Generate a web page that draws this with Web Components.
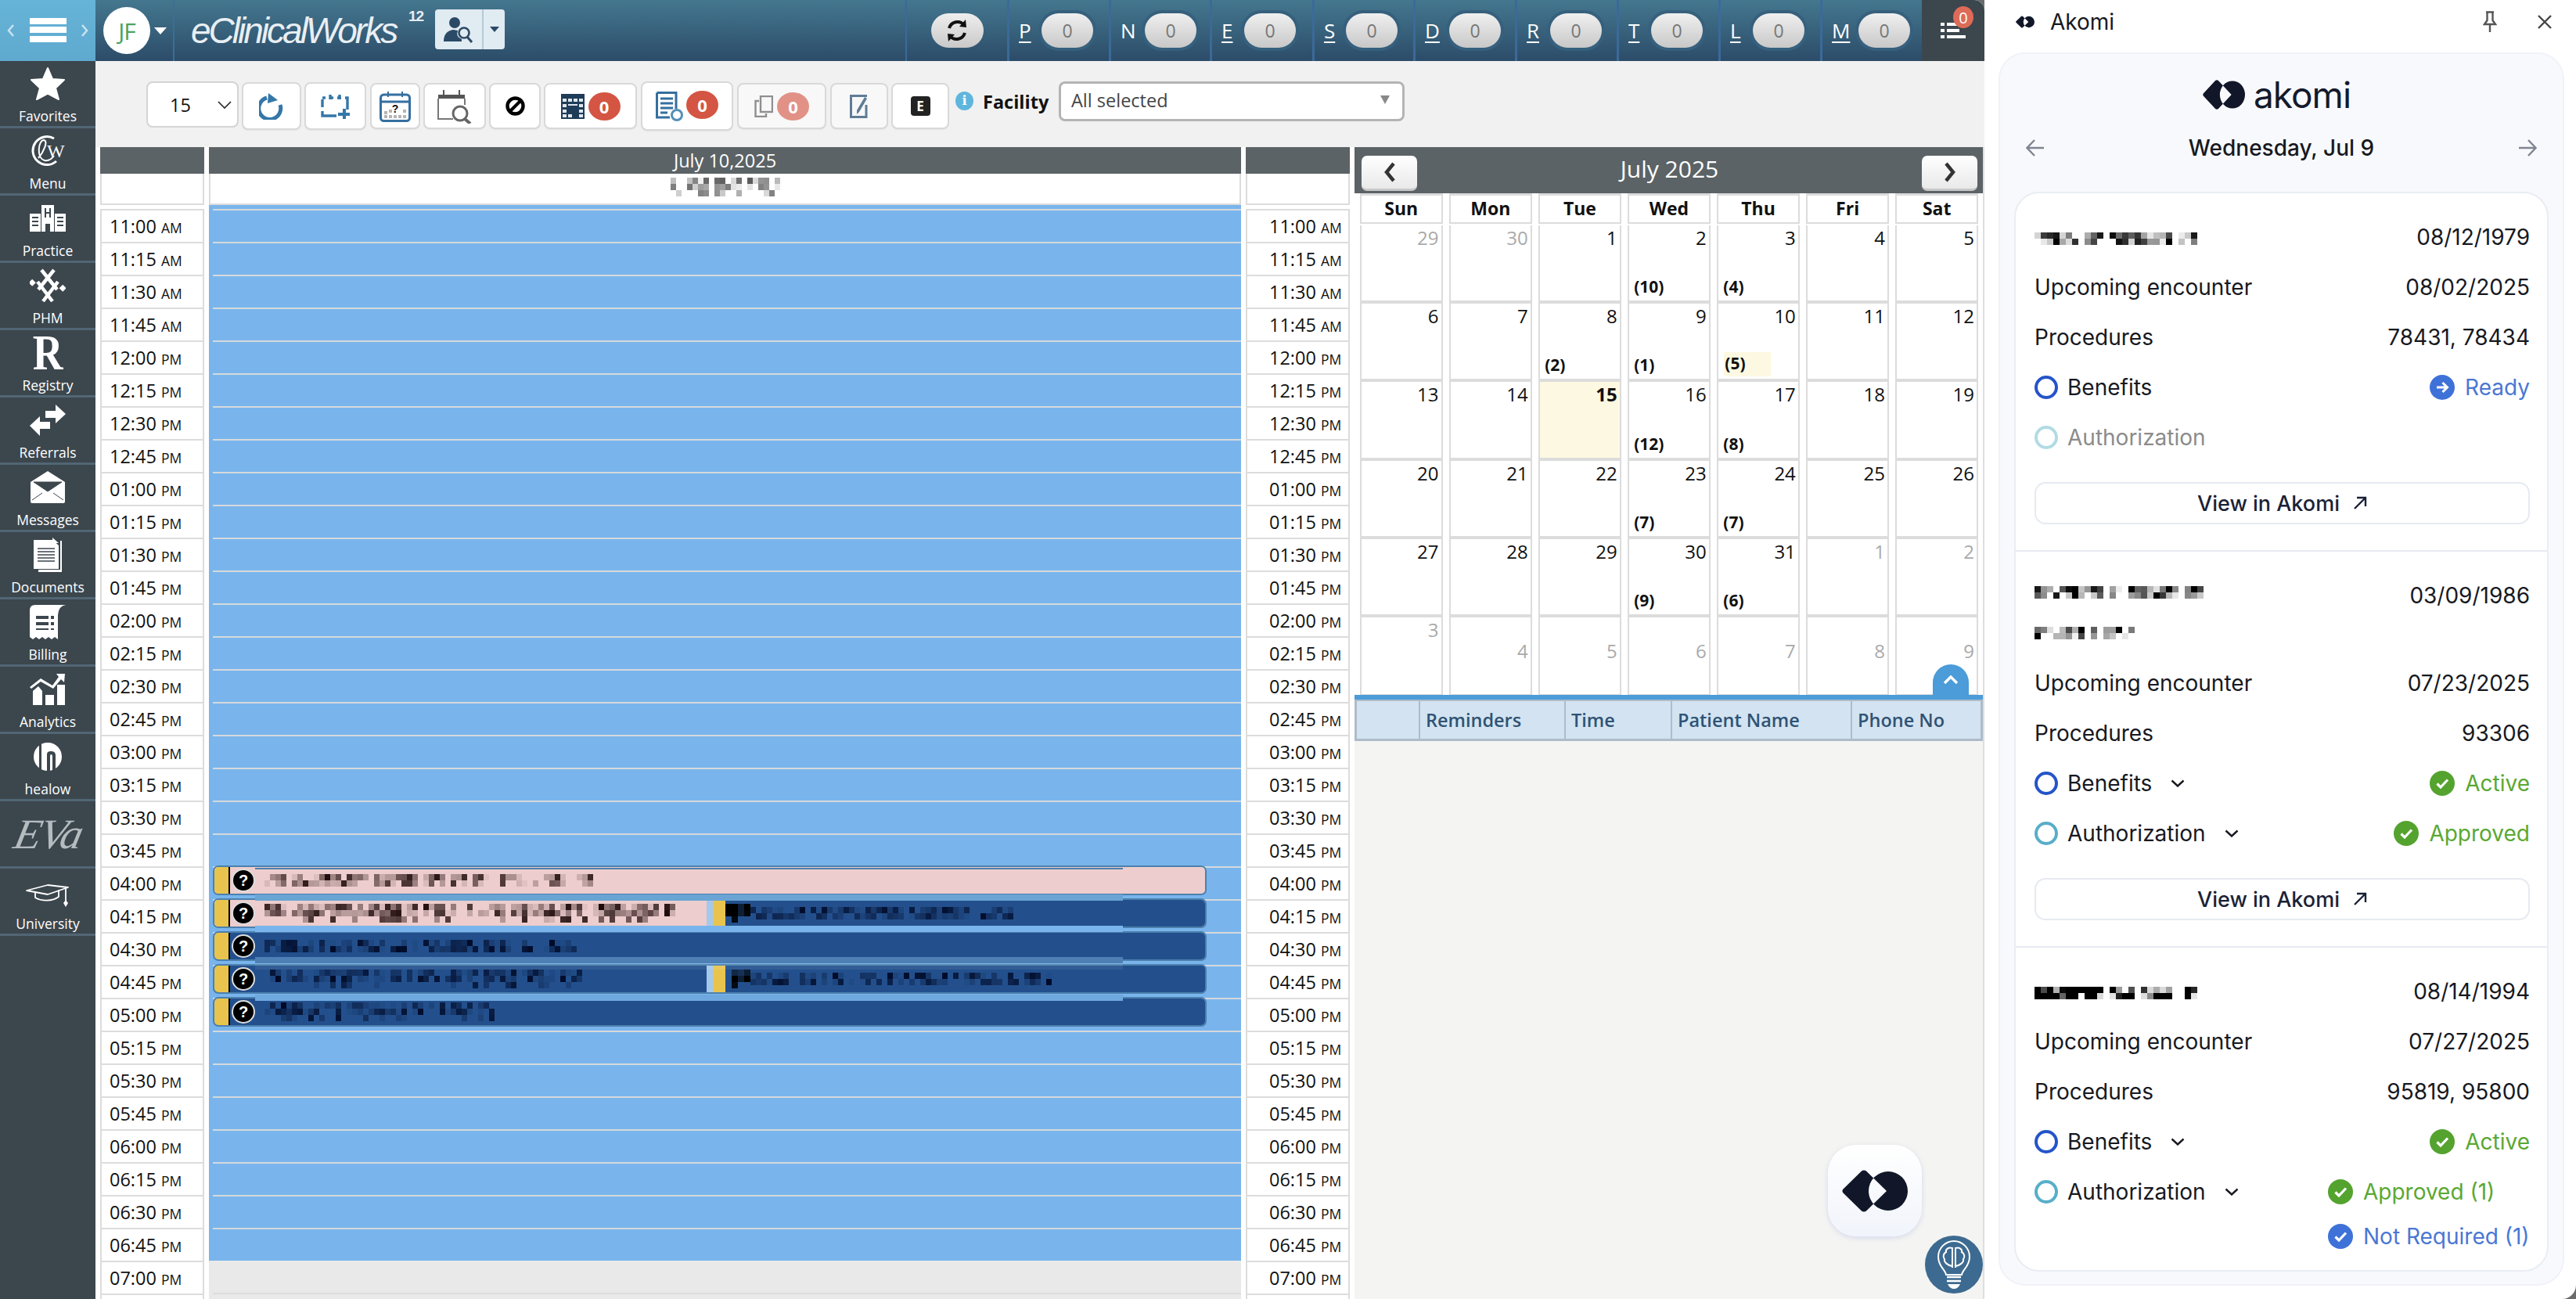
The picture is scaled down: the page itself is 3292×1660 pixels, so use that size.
<!DOCTYPE html>
<html>
<head>
<meta charset="utf-8">
<title>Schedule</title>
<style>
html, body { margin: 0; padding: 0; background: #fff; }
body { display: flex; width: 3292px; height: 1660px; overflow: hidden; background: #6b6b6b; font-family: "Open Sans", "Liberation Sans", sans-serif; }
</style>
</head>
<body>
<ecw-shell>
    <top-bar slot="top"></top-bar>
    <side-nav slot="nav"></side-nav>
    <tool-bar slot="tools"></tool-bar>
    <day-schedule slot="day"></day-schedule>
    <month-panel slot="month"></month-panel>
</ecw-shell>
<akomi-panel>
    <akomi-patient dob="08/12/1979" date="08/02/2025" procedures="78431, 78434" seed="11" namecols="27">
        <akomi-row dot="#2454c9" slot="rows">Benefits<akomi-status slot="value" kind="ready">Ready</akomi-status></akomi-row>
        <akomi-row dot="#b2dbe3" muted slot="rows">Authorization</akomi-row>
    </akomi-patient>
    <akomi-patient dob="03/09/1986" date="07/23/2025" procedures="93306" seed="23" namecols="28" second="16">
        <akomi-row dot="#2454c9" chevron slot="rows">Benefits<akomi-status slot="value" kind="ok">Active</akomi-status></akomi-row>
        <akomi-row dot="#58aec9" chevron slot="rows">Authorization<akomi-status slot="value" kind="ok">Approved</akomi-status></akomi-row>
    </akomi-patient>
    <akomi-patient dob="08/14/1994" date="07/27/2025" procedures="95819, 95800" seed="37" namecols="26" dark last>
        <akomi-row dot="#2454c9" chevron slot="rows">Benefits<akomi-status slot="value" kind="ok">Active</akomi-status></akomi-row>
        <akomi-row dot="#58aec9" chevron slot="rows">Authorization<div slot="value" style="display:flex;flex-direction:column;gap:25px;width:258px"><akomi-status kind="ok">Approved (1)</akomi-status><akomi-status kind="info">Not Required (1)</akomi-status></div></akomi-row>
    </akomi-patient>
</akomi-panel>

<script>
const AKOMI_MARK = `<path fill-rule="evenodd" d="M1.5 24.5 L25 1.5 Q28 -.6 31 1.5 L57 27 L31 52.5 Q28 54.6 25 52.5 L1.5 29.5 Q-.6 27 1.5 24.5Z M34 27 a25 25 0 1 0 50 0 a25 25 0 1 0 -50 0Z"/>`;

const NAV_ICONS = {
    star: `<svg width="46" height="44" viewBox="0 0 46 44"><polygon fill="#fff" stroke="#fff" stroke-width="2" stroke-linejoin="round" points="23,2 29,16 44,17 33,27.5 37,42 23,34.5 9,42 13,27.5 2,17 17,16"/></svg>`,
    ecw: `<svg width="46" height="42" viewBox="0 0 46 42"><path d="M31 5 A18 18 0 1 0 34 34" fill="none" stroke="#fff" stroke-width="3"/><path d="M11 30 C18 22 24 8 18 7 C11 7 8 30 19 33 C25 34 29 30 31 27" fill="none" stroke="#fff" stroke-width="2"/><text x="22" y="29" font-family="Liberation Serif" font-size="24" fill="#fff">W</text></svg>`,
    practice: `<svg width="46" height="34" viewBox="0 0 46 34"><g fill="#fff"><rect y="11" width="14" height="23"/><rect x="32" y="11" width="14" height="23"/><rect x="15" width="16" height="34"/></g><g fill="#3c464d"><rect x="19" y="4" width="2" height="12"/><rect x="25" y="4" width="2" height="12"/><rect x="19" y="9" width="8" height="2"/><rect x="20" y="24" width="6" height="10"/><rect x="3" y="15" width="8" height="2"/><rect x="3" y="20" width="8" height="2"/><rect x="3" y="25" width="8" height="2"/><rect x="35" y="15" width="8" height="2"/><rect x="35" y="20" width="8" height="2"/><rect x="35" y="25" width="8" height="2"/></g></svg>`,
    phm: `<svg width="46" height="44" viewBox="0 0 46 44"><g stroke="#fff" stroke-width="4.5"><path d="M15 2 L35 27"/><path d="M10 17 L29 42"/><path d="M31 2 L11 27"/><path d="M36 17 L17 42"/></g><g fill="#fff"><rect x="0" y="15" width="6.5" height="6.5" transform="rotate(45 3.2 18.2)"/><rect x="39" y="22" width="6.5" height="6.5" transform="rotate(45 42.2 25.2)"/></g></svg>`,
    registry: `<span class="r">R</span>`,
    referrals: `<svg width="46" height="40" viewBox="0 0 46 40"><g fill="#fff"><polygon points="20,8 33,8 33,0 46,12 33,24 33,17 20,17"/><polygon points="26,22 13,22 13,15 0,27 13,40 13,31 26,31"/></g></svg>`,
    messages: `<svg width="44" height="42" viewBox="0 0 44 42"><path d="M0 14 L22 0 L44 14 V39 Q44 41 42 41 H2 Q0 41 0 39Z" fill="#fff"/><path d="M4 14 L40 14 L22 26Z M2 37 L15 28 M42 37 L29 28" fill="#3c464d" stroke="#3c464d" stroke-width="1"/></svg>`,
    documents: `<svg width="36" height="44" viewBox="0 0 36 44"><path d="M34 4 H36 V44 H6 V41 H34Z" fill="#fff"/><path d="M0 3 H24 L32 10 V40 H0Z" fill="#fff"/><path d="M5 14 H27 M5 18 H27 M5 22 H27 M5 26 H27 M5 30 H27" stroke="#3c464d" stroke-width="1.6"/><path d="M24 0 L32 7 H24Z" fill="#fff"/></svg>`,
    billing: `<svg width="46" height="46" viewBox="0 0 46 46"><path d="M7 1 H46 Q37 2 36 14 V45 L32 42 L28 45 L24 42 L20 45 L16 42 L12 45 L8 42 L4 45 L0 42 V8 Q0 1 7 1Z" fill="#fff"/><path d="M8 15 H24 V19 H8Z M27 15 H31 V19 H27Z M8 23 H24 V27 H8Z M27 23 H31 V27 H27Z M8 31 H24 V33 H8Z M27 31 H31 V33 H27Z" fill="#3c464d"/></svg>`,
    analytics: `<svg width="46" height="40" viewBox="0 0 46 40"><g fill="#fff"><path d="M4 22 L11 16 L16 22 V40 H4Z"/><rect x="20" y="27" width="11" height="13"/><rect x="35" y="14" width="10" height="26"/><polygon points="34,0 45,0 44,11 40,7 30,19 14,10 2,19 0,17 14,6 29,15 37,4"/></g></svg>`,
    healow: `<svg width="36" height="36" viewBox="0 0 36 36"><circle cx="18" cy="18" r="18" fill="#fff"/><rect x="7" y="0" width="3" height="36" fill="#3c464d"/><path d="M17 36 V15 Q17 11 22 11 Q28 11 28 16 V36 H24 V18 Q24 15 22 15 Q21 15 21 18 V36Z" fill="#3c464d"/></svg>`,
    eva: `<span class="eva">EVa</span>`,
    hat: `<svg width="56" height="30" viewBox="0 0 56 30"><g fill="none" stroke="#fff" stroke-width="1.8" stroke-linejoin="round"><path d="M1 9 L28 2 L54 5 L28 14Z"/><path d="M12 10 V18 C20 23 34 23 42 17 V8"/><path d="M51 6 V22"/></g><path d="M51 21 L54 25 L51 30 L48 25Z" fill="#fff"/></svg>`
};

const TOOL_ICONS = {
    refresh: `<svg width="32" height="34" viewBox="0 0 32 34"><path d="M10 6 A14 14 0 1 0 27 15" fill="none" stroke="#3477a8" stroke-width="5"/><polygon fill="#3477a8" points="12,0 24,9 11,13"/></svg>`,
    slotadd: `<svg width="37" height="32" viewBox="0 0 37 32"><g fill="none" stroke="#3477a8" stroke-width="3.4"><path d="M2 22 V28 H20"/><path d="M2 17 V7 M2 5 H6 M11 5 H16 M21 5 H26 M31 5 H34 V20"/><path d="M12 1 V7 M24 1 V7"/><path d="M30 19 V32 M22 26 H37" stroke-width="4"/></g></svg>`,
    calhelp: `<svg width="40" height="40" viewBox="0 0 40 40"><rect x="1.5" y="5" width="37" height="33.5" rx="4" fill="#fff" stroke="#356f9f" stroke-width="3"/><path d="M2 14 H38" stroke="#356f9f" stroke-width="3"/><path d="M11 1 V8 M29 1 V8" stroke="#356f9f" stroke-width="2"/><g fill="#b5b5b5"><rect x="6" y="26" width="4" height="4"/><rect x="6" y="31" width="4" height="4"/><rect x="12" y="31" width="4" height="4"/><rect x="18" y="31" width="4" height="4"/><rect x="24" y="31" width="4" height="4"/><rect x="30" y="31" width="4" height="4"/><rect x="30" y="24" width="4" height="4"/><rect x="12" y="24" width="4" height="4"/></g><text x="20" y="28" text-anchor="middle" font-family="Liberation Sans" font-weight="700" font-size="14" fill="#111">?</text></svg>`,
    calsearch: `<svg width="44" height="44" viewBox="0 0 44 44"><path d="M1 7 H35 V12 H1Z" fill="#555"/><path d="M8 1 V8 M28 1 V8" stroke="#555" stroke-width="2"/><path d="M1 12 V38 H20 M35 12 V20" fill="none" stroke="#777" stroke-width="2"/><circle cx="29" cy="31" r="9" fill="none" stroke="#666" stroke-width="3"/><path d="M35 38 L42 44" stroke="#666" stroke-width="4"/></svg>`,
    ban: `<svg width="25" height="25" viewBox="0 0 25 25"><circle cx="12.5" cy="12.5" r="10" fill="none" stroke="#000" stroke-width="4.4"/><path d="M6 19 L19 6" stroke="#000" stroke-width="4"/></svg>`,
    grid: `<svg width="30" height="32" viewBox="0 0 30 32"><rect width="30" height="32" fill="#1f3c58"/><g fill="#dfe7ee"><rect x="2" y="6" width="5" height="4"/><rect x="9" y="6" width="5" height="4"/><rect x="16" y="6" width="5" height="4"/><rect x="23" y="6" width="5" height="4"/><rect x="2" y="13" width="5" height="4"/><rect x="23" y="13" width="5" height="4"/><rect x="9" y="13" width="12" height="2"/><rect x="2" y="20" width="5" height="4"/><rect x="23" y="20" width="5" height="4"/><rect x="9" y="26" width="5" height="4"/><rect x="2" y="26" width="5" height="4"/><rect x="23" y="26" width="5" height="4"/></g></svg>`,
    doc: `<svg width="36" height="38" viewBox="0 0 36 38"><path d="M1.5 1.5 H26 V22 M1.5 1.5 V33 H18" fill="#fff" stroke="#356f9f" stroke-width="3"/><path d="M6 9 H22 M6 15 H22 M6 21 H22 M6 27 H15" stroke="#356f9f" stroke-width="3"/><circle cx="27" cy="30" r="6.5" fill="#fff" stroke="#5590b8" stroke-width="3"/></svg>`,
    copy: `<svg width="24" height="28" viewBox="0 0 24 28"><rect x="8" y="1" width="15" height="20" fill="#f8f8f8" stroke="#8f8f8f" stroke-width="2.4"/><path d="M6 7 H1.5 V27 H15 V23" fill="none" stroke="#8f8f8f" stroke-width="2.4"/></svg>`,
    edit: `<svg width="24" height="30" viewBox="0 0 24 30"><path d="M22 1.5 H1.5 V28.5 H21 V13" fill="none" stroke="#5f7c96" stroke-width="3"/><path d="M22 5 L12 22 L9 25 L9 20 L19 3Z" fill="#5f7c96"/></svg>`
};

class EcwShell extends HTMLElement {
    constructor() {
        super();
        this.attachShadow({mode: "open"});
    }
    connectedCallback() {
        this.shadowRoot.innerHTML = `
        <style>
        :host {
            display: grid;
            grid-template-columns: 122px 1fr;
            grid-template-rows: 78px 110px 1fr;
            flex: none;
            width: 2536px;
            height: 1660px;
            background: #fff;
            overflow: hidden;
            border-top-right-radius: 14px;
            font-family: "Open Sans", "Liberation Sans", sans-serif;
        }
        .top { grid-column: 1 / 3; display: flex; }
        .nav { grid-row: 2 / 4; display: flex; }
        .main { display: flex; min-height: 0; }
        .tools { display: flex; }
        </style>
        <div class="top"><slot name="top"></slot></div>
        <div class="nav"><slot name="nav"></slot></div>
        <div class="tools"><slot name="tools"></slot></div>
        <div class="main"><slot name="day"></slot><slot name="month"></slot></div>`;
    }
}

class TopBar extends HTMLElement {
    constructor() {
        super();
        this.attachShadow({mode: "open"});
    }
    connectedCallback() {
        // letter, underlined, cell width, gap right of the pill
        const cells = [["P", 1, 130, 20], ["N", 0, 129, 17], ["E", 1, 131, 21], ["S", 1, 129, 20], ["D", 1, 130, 18], ["R", 1, 130, 19], ["T", 1, 130, 20], ["L", 1, 130, 20], ["M", 1, 130, 15]];
        this.shadowRoot.innerHTML = `
        <style>
        :host {
            display: flex;
            width: 100%;
            height: 78px;
            background: linear-gradient(#44778f, #2c4c69);
            color: #fff;
        }
        .burger { width: 122px; flex: none; background: linear-gradient(#66b4d8, #5fa9cf); display: flex; align-items: center; justify-content: center; }
        .avatar { width: 101px; flex: none; display: flex; align-items: center; padding-left: 10px; box-sizing: border-box; border-right: 2px solid #3c6f92; gap: 5px; }
        .circle { width: 60px; height: 60px; border-radius: 50%; background: #fff; color: #4ba35f; font-size: 30px; display: flex; align-items: center; justify-content: center; letter-spacing: -1px; }
        .tri { border: 8px solid transparent; border-top: 9px solid #fff; border-bottom: 0; }
        .logo { margin-left: 21px; width: 278px; flex: none; font: italic 46px "Liberation Sans", sans-serif; letter-spacing: -3px; color: #e9eff3; white-space: nowrap; padding-top: 12px; box-sizing: border-box; }
        .ver { width: 34px; flex: none; font: 700 19px "Liberation Sans", sans-serif; color: #e8eef2; letter-spacing: -1px; padding-top: 10px; box-sizing: border-box; }
        .psearch { margin-top: 12px; width: 89px; height: 51px; border-radius: 4px; background: #e1ebf2; display: flex; flex: none; }
        .psearch .a { width: 62px; display: flex; align-items: center; justify-content: center; border-right: 2px solid #b6c9d6; box-sizing: border-box; }
        .psearch .b { flex: 1; display: flex; align-items: center; justify-content: center; }
        .tri2 { border: 6px solid transparent; border-top: 7px solid #2b4a66; border-bottom: 0; }
        .spacer { flex: 1; }
        .sync { width: 130px; flex: none; box-sizing: border-box; border-left: 2px solid #3b6a99; display: flex; align-items: center; justify-content: center; }
        .sync div { width: 67px; height: 44px; border-radius: 22px; background: linear-gradient(#eee, #c9c9c9); display: flex; align-items: center; justify-content: center; }
        .cell { flex: none; box-sizing: border-box; border-left: 3px solid #3b6a99; display: flex; align-items: center; justify-content: space-between; padding-left: 12px; }
        .letter { font-size: 26px; line-height: 36px; text-underline-offset: 4px; text-decoration-thickness: 2px; }
        .u { text-decoration-line: underline; }
        .pill { width: 66px; height: 44px; border-radius: 22px; background: linear-gradient(#f0f0f0, #c8c8c8); color: #777; box-shadow: 0 0 0 4px #36607d; font-size: 23px; display: flex; align-items: center; justify-content: center; }
        .notes { width: 80px; flex: none; background: #3c464d; position: relative; display: flex; align-items: center; justify-content: center; border-top-right-radius: 14px; }
        .badge { position: absolute; left: 40px; top: 8px; width: 26px; height: 28px; border-radius: 50%; background: #de6b57; font-size: 20px; display: flex; align-items: center; justify-content: center; }
        </style>
        <div class="burger">
            <svg width="104" height="32" viewBox="0 0 104 32">
                <path d="M8 9 L2 16 L8 23 M96 9 L102 16 L96 23" fill="none" stroke="#c9e3ef" stroke-width="2.5"/>
                <path d="M29 0 H76 V8 H29Z M29 11 H76 V19 H29Z M29 23 H76 V31 H29Z" fill="#fff"/>
            </svg>
        </div>
        <div class="avatar"><div class="circle">JF</div><div class="tri"></div></div>
        <div class="logo">eClinicalWorks</div>
        <div class="ver">12</div>
        <div class="psearch">
            <div class="a"><svg width="40" height="34" viewBox="0 0 40 34"><circle cx="15" cy="8" r="7" fill="#2b4a66"/><path d="M1 32 Q1 19 13 17 L19 18 Q16 26 24 29 V32Z" fill="#2b4a66"/><circle cx="27" cy="21" r="6.5" fill="none" stroke="#2b4a66" stroke-width="2.6"/><path d="M31 26 L37 33" stroke="#2b4a66" stroke-width="3"/></svg></div>
            <div class="b"><div class="tri2"></div></div>
        </div>
        <div class="spacer"></div>
        <div class="sync"><div><svg width="28" height="30" viewBox="0 0 28 30"><path d="M4 12 A11 11 0 0 1 23 8 M24 18 A11 11 0 0 1 5 22" fill="none" stroke="#111" stroke-width="4"/><polygon points="25,1 26,11 17,10" fill="#111"/><polygon points="3,29 2,19 11,20" fill="#111"/></svg></div></div>
        ${cells.map(c => `<div class="cell" style="width:${c[2]}px;padding-right:${c[3]}px"><span class="letter ${c[1] ? "u" : ""}">${c[0]}</span><span class="pill">0</span></div>`).join("")}
        <div class="notes">
            <svg width="32" height="22" viewBox="0 0 32 22"><path d="M0 1 H5 V5 H0Z M0 9 H5 V13 H0Z M0 17 H5 V21 H0Z M8 1 H22 V5 H8Z M8 9 H24 V13 H8Z M8 17 H32 V21 H8Z" fill="#fff"/></svg>
            <div class="badge">0</div>
        </div>`;
    }
}

class NavItem extends HTMLElement {
    constructor() {
        super();
        this.attachShadow({mode: "open"});
    }
    connectedCallback() {
        const label = this.getAttribute("label");
        this.shadowRoot.innerHTML = `
        <style>
        :host {
            display: flex;
            flex-direction: column;
            height: 86px;
            box-sizing: border-box;
            border-bottom: 3px solid #516674;
            color: #fff;
        }
        .icon { height: ${label ? 58 : 83}px; display: flex; align-items: center; justify-content: center; }
        .label { height: 25px; line-height: 25px; font-size: 17.5px; text-align: center; }
        .r { font: 700 64px/58px "Liberation Serif", serif; display: block; transform: scaleX(.84); }
        .eva { font: italic 400 54px/54px "Liberation Serif", serif; color: #b4bcc0; transform: skewX(-12deg) scaleX(1.05); display: block; letter-spacing: -2px; }
        </style>
        <div class="icon" style="${this.hasAttribute("low") ? "padding-top:10px" : ""}">${NAV_ICONS[this.getAttribute("icon")]}</div>
        ${label ? `<div class="label">${label}</div>` : ""}`;
    }
}

class SideNav extends HTMLElement {
    constructor() {
        super();
        this.attachShadow({mode: "open"});
    }
    connectedCallback() {
        const items = [
            ["star", "Favorites"], ["ecw", "Menu"], ["practice", "Practice"], ["phm", "PHM"],
            ["registry", "Registry"], ["referrals", "Referrals"], ["messages", "Messages"],
            ["documents", "Documents"], ["billing", "Billing"], ["analytics", "Analytics"],
            ["healow", "healow"], ["eva", ""], ["hat", "University"]
        ];
        this.shadowRoot.innerHTML = `
        <style>
        :host { display: block; width: 122px; background: #3c464d; }
        </style>
        ${items.map(i => `<nav-item icon="${i[0]}" label="${i[1]}" ${i[0] == "hat" ? "low" : ""}></nav-item>`).join("")}`;
    }
}

class ToolBtn extends HTMLElement {
    constructor() {
        super();
        this.attachShadow({mode: "open"});
    }
    connectedCallback() {
        const w = this.getAttribute("w");
        const h = this.getAttribute("h") || 59;
        const top = this.getAttribute("top") || 2;
        this.shadowRoot.innerHTML = `
        <style>
        :host {
            display: flex;
            align-items: center;
            justify-content: center;
            gap: 5px;
            flex: none;
            box-sizing: border-box;
            width: ${w}px;
            height: ${h}px;
            margin-top: ${top}px;
            background: ${this.hasAttribute("faded") ? "#f8f8f8" : "#fff"};
            border: 2px solid #d9d9d9;
            border-radius: 8px;
            box-shadow: 0 1px 1px #e4e4e4;
        }
        </style>
        <slot></slot>`;
    }
}

class CountBadge extends HTMLElement {
    constructor() {
        super();
        this.attachShadow({mode: "open"});
    }
    connectedCallback() {
        this.shadowRoot.innerHTML = `
        <style>
        :host {
            display: flex;
            align-items: center;
            justify-content: center;
            width: 41px;
            height: 36px;
            border-radius: 50%;
            background: ${this.getAttribute("color") || "#d45543"};
            color: #fff;
            font: 700 22px "Open Sans", sans-serif;
        }
        </style>
        <slot></slot>`;
    }
}

class ToolBar extends HTMLElement {
    constructor() {
        super();
        this.attachShadow({mode: "open"});
    }
    connectedCallback() {
        this.shadowRoot.innerHTML = `
        <style>
        :host {
            display: flex;
            align-items: flex-start;
            width: 100%;
            height: 110px;
            box-sizing: border-box;
            padding: 26px 0 0 65px;
            gap: 4px;
            background: #f1f1f1;
            color: #111;
            font-family: "Open Sans", "Liberation Sans", sans-serif;
        }
        .drop { width: 118px; height: 59px; box-sizing: border-box; flex: none; background: #fff; border: 2px solid #d4d4d4; border-radius: 8px; display: flex; align-items: center; justify-content: space-between; padding: 0 7px 0 28px; font-size: 23.5px; }
        .info { margin: 13px 0 0 4px; width: 23px; height: 24px; border-radius: 50%; background: #5fb6dd; color: #fff; font: 700 16px/24px "DejaVu Serif", serif; text-align: center; flex: none; }
        .fac { margin: 8px 0 0 8px; font-weight: 700; font-size: 23.5px; line-height: 36px; width: 84px; flex: none; white-space: nowrap; }
        .sel { margin-left: 9px; width: 442px; height: 51px; box-sizing: border-box; flex: none; background: #fff; border: 3px solid #b4b4b4; border-radius: 8px; display: flex; align-items: center; justify-content: space-between; padding: 0 16px 4px 13px; font-size: 23.5px; color: #444; }
        .tri { border: 6px solid transparent; border-top: 11px solid #888; border-bottom: 0; }
        .e { width: 25px; height: 25px; background: #222; border-radius: 4px; color: #fff; font: 700 17px/25px "Open Sans", sans-serif; text-align: center; }
        </style>
        <div class="drop"><span>15</span><svg width="18" height="10" viewBox="0 0 18 10"><path d="M1 1 L9 9 L17 1" fill="none" stroke="#222" stroke-width="1.6"/></svg></div>
        <tool-btn w="76" h="61" top="1">${TOOL_ICONS.refresh}</tool-btn>
        <tool-btn w="79" h="61" top="1">${TOOL_ICONS.slotadd}</tool-btn>
        <tool-btn w="64" style="margin-left:1px">${TOOL_ICONS.calhelp}</tool-btn>
        <tool-btn w="80">${TOOL_ICONS.calsearch}</tool-btn>
        <tool-btn w="66">${TOOL_ICONS.ban}</tool-btn>
        <tool-btn w="119">${TOOL_ICONS.grid}<count-badge>0</count-badge></tool-btn>
        <tool-btn w="118" h="63" top="0" style="margin-left:1px">${TOOL_ICONS.doc}<count-badge style="margin:-4px 0 0 -2px">0</count-badge></tool-btn>
        <tool-btn w="114" faded style="margin-left:1px">${TOOL_ICONS.copy}<count-badge color="#e29186">0</count-badge></tool-btn>
        <tool-btn w="74" faded style="margin-left:1px">${TOOL_ICONS.edit}</tool-btn>
        <tool-btn w="74"><div class="e">E</div></tool-btn>
        <div class="info">i</div>
        <div class="fac">Facility</div>
        <div class="sel"><span>All selected</span><div class="tri"></div></div>`;
    }
}

class PixelBlur extends HTMLElement {
    constructor() {
        super();
        this.attachShadow({mode: "open"});
    }
    connectedCallback() {
        const cols = +this.getAttribute("cols");
        const rows = +this.getAttribute("rows") || 2;
        const cw = +this.getAttribute("cw") || 8;
        const ch = +this.getAttribute("ch") || 8;
        const ink = this.getAttribute("ink") || "0,0,0";
        const power = +this.getAttribute("power") || 1;
        let s = (+this.getAttribute("seed") || 1) * 9301 + 49297;
        const rnd = () => {
            s = (s * 9301 + 49297) % 233280;
            return s / 233280;
        };
        let out = "";
        for (let x = 0; x < cols; x++) {
            if (rnd() < 0.14) continue;
            for (let y = 0; y < rows; y++) {
                if (y == rows - 1 && rows > 2 && rnd() < 0.7) continue;
                const a = Math.pow(rnd(), 1.6) * power;
                if (a < 0.05) continue;
                out += `<rect x="${x * cw}" y="${y * ch}" width="${cw}" height="${ch}" fill="rgba(${ink},${Math.min(a, 1).toFixed(2)})"/>`;
            }
        }
        this.shadowRoot.innerHTML = `
        <style>:host { display: block; flex: none; line-height: 0; } svg { display: block; }</style>
        <svg width="${cols * cw}" height="${rows * ch}" shape-rendering="crispEdges" aria-hidden="true">${out}</svg>`;
    }
}

class ApptRow extends HTMLElement {
    constructor() {
        super();
        this.attachShadow({mode: "open"});
    }
    connectedCallback() {
        const bg = this.getAttribute("kind") == "pink" ? "#edcdcd" : "#23508d";
        const ink = this.getAttribute("kind") == "pink" ? "30,10,10" : "0,10,40";
        const split = this.getAttribute("split");
        this.shadowRoot.innerHTML = `
        <style>
        :host {
            display: flex;
            box-sizing: border-box;
            height: 38px;
            border: 2px solid #4c80ad;
            border-radius: 7px;
            overflow: hidden;
            background: ${bg};
        }
        .part { display: flex; align-items: center; height: 100%; }
        .first { ${split ? "width: 629px; flex: none;" : "flex: 1;"} background: ${bg}; }
        .second { flex: 1; background: #23508d; }
        .gap { width: 8px; height: 100%; background: #a4c9ec; flex: none; }
        .yellow { width: 18px; height: 100%; background: #e8c44f; flex: none; }
        .bar { width: 2px; height: 100%; background: #000; flex: none; }
        .q { width: 26px; height: 26px; margin: 0 4px 0 2px; flex: none; border-radius: 50%; background: #000; border: 2px solid #ddd; color: #fff; font: 700 20px/26px "Liberation Sans", sans-serif; text-align: center; }
        pixel-blur { margin-left: 8px; }
        </style>
        <div class="part first">
            <div class="yellow"></div><div class="bar"></div><div class="q">?</div>
            <pixel-blur cols="${this.getAttribute("cols")}" rows="${this.getAttribute("rows")}" seed="${this.getAttribute("seed")}" ink="${ink}" cw="7"></pixel-blur>
        </div>
        ${split ? `<div class="gap"></div><div class="part second">
            <div class="yellow" style="width:16px"></div>
            <pixel-blur cols="4" rows="3" seed="${+split + 4}" ink="0,0,0" power="2" cw="8" style="margin:0"></pixel-blur>
            <pixel-blur cols="${split}" rows="2" seed="${split}" ink="0,10,40" cw="7" style="margin-left:0"></pixel-blur>
        </div>` : ""}`;
    }
}

class DaySchedule extends HTMLElement {
    constructor() {
        super();
        this.attachShadow({mode: "open"});
    }
    connectedCallback() {
        const times = [];
        for (let i = 0; i < 33; i++) {
            const mins = 11 * 60 + i * 15;
            let h = Math.floor(mins / 60);
            const pm = h >= 12;
            if (h > 12) h -= 12;
            const hh = String(h).padStart(2, "0");
            const mm = String(mins % 60).padStart(2, "0");
            times.push(`<div class="time">${hh}:${mm} <small>${pm ? "PM" : "AM"}</small></div>`);
        }
        times.push(`<div class="time"></div>`);
        const bands = [
            [3, 2, "#4c80ad"], [37, 8, "#6aa4d4"], [77, 8, "#79b5ec"], [117, 8, "#4e7fb5"],
            [125, 8, "rgba(255,255,255,.07)"], [165, 8, "#6fa8df"]
        ];
        this.shadowRoot.innerHTML = `
        <style>
        :host {
            display: grid;
            grid-template-columns: 133px 1319px 133px;
            column-gap: 6px;
            flex: none;
            box-sizing: border-box;
            width: 1609px;
            height: 1472px;
            padding: 0 6px;
            background: #fff;
            overflow: hidden;
            color: #111;
        }
        .col { display: flex; flex-direction: column; min-width: 0; }
        .head { height: 34px; flex: none; background: #5c6366; color: #fff; text-align: center; font-size: 23.5px; line-height: 34px; }
        .sub { height: 40px; flex: none; box-sizing: border-box; background: #fff; border: 2px solid #dcdcdc; border-top: 0; display: flex; align-items: center; justify-content: center; }
        .gapline { height: 5px; flex: none; }
        .time { height: 42px; flex: none; box-sizing: border-box; border: 2px solid #dcdcdc; border-bottom: 0; padding-left: 10px; font-size: 23.5px; line-height: 40px; white-space: nowrap; }
        .right .time { padding-left: 28px; }
        small { font-size: 17.5px; }
        .body { position: relative; flex: 1; background: #e9e9e9; min-height: 0; }
        .lead { height: 5px; background: #79b5ec; }
        .slot { height: 42px; background: #79b5ec; position: relative; }
        .slot::before { content: ""; position: absolute; left: 5px; right: 0; top: 0; height: 2px; background: #d6d9dc; }
        .close { position: absolute; left: 5px; right: 0; top: 1390px; height: 2px; background: #dcdcdc; }
        .appts { position: absolute; left: 5px; top: 844px; width: 1270px; display: grid; grid-auto-rows: 42px; }
        .band { position: absolute; left: 59px; width: 1109px; }
        </style>
        <div class="col">
            <div class="head"></div><div class="sub"></div><div class="gapline"></div>
            ${times.join("")}
        </div>
        <div class="col">
            <div class="head">July 10,2025</div>
            <div class="sub"><pixel-blur cols="20" rows="3" seed="5" cw="7" power=".7" style="margin-top:-4px"></pixel-blur></div>
            <div class="body">
                <div class="lead"></div>
                ${times.slice(0, 32).map(() => `<div class="slot"></div>`).join("")}
                <div class="close"></div>
                <div class="appts">
                    <appt-row kind="pink" cols="60" rows="2" seed="7"></appt-row>
                    <appt-row kind="pink" cols="75" rows="3" seed="8" split="48"></appt-row>
                    <appt-row kind="blue" cols="58" rows="2" seed="9"></appt-row>
                    <appt-row kind="blue" cols="58" rows="3" seed="10" split="55"></appt-row>
                    <appt-row kind="blue" cols="42" rows="3" seed="12"></appt-row>
                </div>
                ${bands.map(b => `<div class="band" style="top:${844 + b[0]}px;height:${b[1]}px;background:${b[2]}"></div>`).join("")}
            </div>
        </div>
        <div class="col right">
            <div class="head"></div><div class="sub"></div><div class="gapline"></div>
            ${times.join("")}
        </div>`;
    }
}

class MonthPanel extends HTMLElement {
    constructor() {
        super();
        this.attachShadow({mode: "open"});
    }
    connectedCallback() {
        const counts = {2: 10, 3: 4, 8: 2, 9: 1, 10: 5, 16: 12, 17: 8, 23: 7, 24: 7, 30: 9, 31: 6};
        const days = [];
        [29, 30].forEach(d => days.push({d: d, out: true}));
        for (let d = 1; d <= 31; d++) days.push({d: d});
        for (let d = 1; d <= 9; d++) days.push({d: d, out: true, drop: d > 3});
        const cells = days.map(x => {
            const n = !x.out && counts[x.d];
            return `<div class="day ${x.out ? "out" : ""} ${!x.out && x.d == 15 ? "today" : ""} ${x.drop ? "drop" : ""}">
                <span class="num">${x.d}</span>
                ${n ? `<span class="count ${x.d == 10 ? "mark" : ""}">(${n})</span>` : ""}
            </div>`;
        }).join("");
        this.shadowRoot.innerHTML = `
        <style>
        :host {
            display: flex;
            flex-direction: column;
            position: relative;
            flex: none;
            width: 805px;
            height: 1472px;
            background: #f4f4f2;
            border-right: 2px solid #dedede;
            box-sizing: border-box;
            color: #111;
        }
        .bar { height: 59px; flex: none; background: #5c6366; color: #fff; display: flex; align-items: center; justify-content: space-between; padding: 0 7px 0 9px; font-size: 30px; }
        .nav { width: 71px; height: 45px; margin-top: 8px; border-radius: 7px; background: linear-gradient(#fff, #e9e9e9); border-bottom: 3px solid #c8c8c8; box-sizing: border-box; display: flex; align-items: center; justify-content: center; }
        .title { margin-top: -5px; }
        .cal { height: 641px; flex: none; box-sizing: border-box; background: #fff; padding: 0 6px 0 7px; overflow: hidden; }
        .grid { display: grid; grid-template-columns: repeat(7, 1fr); column-gap: 8.5px; }
        .wd { height: 39px; box-sizing: border-box; border: 2px solid #dcdcdc; border-top-width: 3px; text-align: center; font-weight: 700; font-size: 23px; line-height: 33px; }
        .weeks { margin-top: 2px; }
        .day { height: 100.2px; box-sizing: border-box; border: 2px solid #dcdcdc; border-width: 0 2px 4px; padding: 0 3px 0 5px; display: flex; flex-direction: column; font-size: 24px; }
        .weeks .day:nth-child(n+36) { border-bottom-width: 2px; }
        .num { text-align: right; line-height: 32px; }
        .out { color: #aaa; }
        .drop .num { margin-top: 27px; }
        .today { background: #fdf8e1; font-weight: 700; }
        .count { margin-top: auto; margin-bottom: 4px; font-weight: 700; font-size: 21px; line-height: 28px; padding-left: 1px; }
        .mark { background: #fdf8e1; width: 60px; height: 31px; box-sizing: border-box; margin-left: 2px; margin-bottom: 3px; }
        .rule { height: 6px; flex: none; background: #4b9cd8; }
        .head { height: 53px; flex: none; box-sizing: border-box; display: flex; background: #d3e3f1; border: 3px solid #aebcc9; border-top-width: 2px; color: #2f5374; font-weight: 600; font-size: 23.5px; line-height: 49px; }
        .head div { box-sizing: border-box; border-right: 2px solid #aebcc9; padding-left: 7px; white-space: nowrap; }
        .head div:last-child { border-right: 0; }
        .up { position: absolute; left: 739px; top: 661px; width: 46px; height: 39px; border-radius: 23px 23px 0 0; background: #4b9cd8; display: flex; align-items: center; justify-content: center; }
        .akomi { position: absolute; left: 605px; top: 1275px; width: 120px; height: 117px; border-radius: 36px; background: linear-gradient(#fff, #f1f4fb); box-shadow: 0 2px 6px rgba(120,140,220,.25); display: flex; align-items: center; justify-content: center; }
        .bulb { position: absolute; left: 729px; top: 1391px; }
        </style>
        <div class="bar">
            <div class="nav"><svg width="16" height="26" viewBox="0 0 16 26"><path d="M13 2 L4 13 L13 24" fill="none" stroke="#333" stroke-width="4.5"/></svg></div>
            <div class="title">July 2025</div>
            <div class="nav"><svg width="16" height="26" viewBox="0 0 16 26"><path d="M3 2 L12 13 L3 24" fill="none" stroke="#333" stroke-width="4.5"/></svg></div>
        </div>
        <div class="cal">
            <div class="grid">${["Sun", "Mon", "Tue", "Wed", "Thu", "Fri", "Sat"].map(w => `<div class="wd">${w}</div>`).join("")}</div>
            <div class="grid weeks">${cells}</div>
        </div>
        <div class="rule"></div>
        <div class="head">
            <div style="width:81px"></div>
            <div style="width:186px">Reminders</div>
            <div style="width:136px">Time</div>
            <div style="width:230px">Patient Name</div>
            <div style="flex:1">Phone No</div>
        </div>
        <div class="up"><svg width="20" height="12" viewBox="0 0 20 12"><path d="M2 10 L10 2 L18 10" fill="none" stroke="#fff" stroke-width="3.4"/></svg></div>
        <div class="akomi"><svg width="84" height="54" viewBox="0 0 84 54" fill="#111729">${AKOMI_MARK}</svg></div>
        <svg class="bulb" width="74" height="74" viewBox="0 0 74 74">
            <circle cx="37" cy="37" r="37" fill="#3d6a90"/>
            <g fill="none" stroke="#fff" stroke-width="2">
                <path d="M27 50 C26 43 17 40 17 27 A20 20 0 0 1 57 27 C57 40 48 43 47 50Z"/>
                <path d="M35 15 V41 M39 15 V41"/>
                <path d="M35 16 C30 14 26 18 27 21 C23 23 23 28 25 30 C24 34 29 38 35 39"/>
                <path d="M39 16 C44 14 48 18 47 21 C51 23 51 28 49 30 C50 34 45 38 39 39"/>
            </g>
            <path d="M28 53 H46 M28 58 H46" stroke="#fff" stroke-width="2.4"/>
            <path d="M29 62 H45 Q42 68 37 68 Q32 68 29 62Z" fill="#fff"/>
        </svg>`;
    }
}

class AkomiStatus extends HTMLElement {
    constructor() {
        super();
        this.attachShadow({mode: "open"});
    }
    connectedCallback() {
        const kind = this.getAttribute("kind");
        const color = {ok: "#54a32f", ready: "#3f72d8", info: "#3f72d8"}[kind];
        const text = {ok: "#5aa832", ready: "#4a77d4", info: "#4a77d4"}[kind];
        const glyph = kind == "ready"
            ? `<path d="M9 16 H22 M16.5 10 L22.5 16 L16.5 22" fill="none" stroke="#fff" stroke-width="3"/>`
            : `<path d="M9.5 16.5 L14 21 L23 11.5" fill="none" stroke="#fff" stroke-width="3.2"/>`;
        this.shadowRoot.innerHTML = `
        <style>
        :host { display: flex; align-items: center; gap: 13px; color: ${text}; font-size: 28px; line-height: 32px; white-space: nowrap; }
        svg { flex: none; }
        </style>
        <svg width="32" height="32" viewBox="0 0 32 32"><circle cx="16" cy="16" r="16" fill="${color}"/>${glyph}</svg>
        <slot></slot>`;
    }
}

class AkomiRow extends HTMLElement {
    constructor() {
        super();
        this.attachShadow({mode: "open"});
    }
    connectedCallback() {
        this.shadowRoot.innerHTML = `
        <style>
        :host {
            display: flex;
            align-items: flex-start;
            justify-content: space-between;
            color: ${this.hasAttribute("muted") ? "#8b8b8b" : "#17191f"};
            font-size: 28px;
        }
        .left { height: 64px; display: flex; align-items: center; }
        .ring { width: 30px; height: 30px; box-sizing: border-box; border-radius: 50%; border: 4px solid ${this.getAttribute("dot")}; margin-right: 12px; flex: none; }
        .chev { margin-left: 24px; }
        .val { min-height: 64px; padding-top: 16px; box-sizing: border-box; display: flex; align-items: flex-start; }
        </style>
        <div class="left">
            <div class="ring"></div>
            <slot></slot>
            ${this.hasAttribute("chevron") ? `<svg class="chev" width="18" height="10" viewBox="0 0 18 10"><path d="M1.5 1.5 L9 8.5 L16.5 1.5" fill="none" stroke="#17191f" stroke-width="2.4"/></svg>` : ""}
        </div>
        <div class="val"><slot name="value"></slot></div>`;
    }
}

class AkomiPatient extends HTMLElement {
    constructor() {
        super();
        this.attachShadow({mode: "open"});
    }
    connectedCallback() {
        const seed = this.getAttribute("seed");
        const last = this.hasAttribute("last");
        const second = this.getAttribute("second");
        const power = this.hasAttribute("dark") ? 3 : 1.2;
        this.shadowRoot.innerHTML = `
        <style>
        :host {
            display: block;
            padding: 24px 22px ${last ? 0 : 33}px 24px;
            border-bottom: ${last ? 0 : 2}px solid #e6e9f0;
            color: #17191f;
            font-size: 28px;
        }
        .row { display: flex; justify-content: space-between; align-items: center; height: 64px; }
        .tall { height: 112px; align-items: flex-start; padding-top: 16px; box-sizing: border-box; }
        .names { display: flex; flex-direction: column; gap: 36px; padding-top: 4px; }
        .tall span { line-height: 32px; }
        .btn { margin-top: 25px; height: 54px; box-sizing: border-box; border: 2px solid #e6eaf0; border-radius: 14px; display: flex; align-items: center; justify-content: center; gap: 17px; color: #1a2236; font-weight: 500; font-size: 27px; }
        </style>
        <div class="row ${second ? "tall" : ""}">
            <div class="names">
                <pixel-blur cols="${this.getAttribute("namecols")}" rows="2" seed="${seed}" power="${power}"></pixel-blur>
                ${second ? `<pixel-blur cols="${second}" rows="2" seed="${+seed + 1}" power="${power}"></pixel-blur>` : ""}
            </div>
            <span>${this.getAttribute("dob")}</span>
        </div>
        <div class="row"><span>Upcoming encounter</span><span>${this.getAttribute("date")}</span></div>
        <div class="row"><span>Procedures</span><span>${this.getAttribute("procedures")}</span></div>
        <slot name="rows"></slot>
        ${last ? "" : `<div class="btn"><span>View in Akomi</span><svg width="18" height="18" viewBox="0 0 18 18"><path d="M2 16 L16 2 M5 2 H16 V13" fill="none" stroke="#1a2236" stroke-width="2.4"/></svg></div>`}`;
    }
}

class AkomiPanel extends HTMLElement {
    constructor() {
        super();
        this.attachShadow({mode: "open"});
    }
    connectedCallback() {
        this.shadowRoot.innerHTML = `
        <style>
        :host {
            display: flex;
            flex-direction: column;
            flex: none;
            width: 756px;
            height: 1660px;
            box-sizing: border-box;
            padding: 0 15px 0 18px;
            background: #fff;
            border-bottom-right-radius: 18px;
            font-family: Inter, "Liberation Sans", sans-serif;
            color: #17191f;
        }
        .title { height: 67px; flex: none; box-sizing: border-box; display: flex; align-items: center; padding: 0 15px 11px 22px; font-size: 28px; }
        .title span { margin-left: 20px; flex: 1; }
        .pin { margin-right: 51px; }
        .outer { height: 1576px; flex: none; box-sizing: border-box; background: #f8f9fc; border: 2px solid #f0f2f7; border-radius: 34px; padding: 0 18px; }
        .brand { margin-top: 33px; height: 37px; display: flex; align-items: center; justify-content: center; gap: 11px; padding-right: 12px; font-size: 46px; font-weight: 400; letter-spacing: -1px; color: #141a2c; }
        .date { margin-top: 30px; height: 40px; display: flex; align-items: center; justify-content: space-between; padding: 0 15px; font-weight: 500; font-size: 28px; }
        .inner { margin-top: 36px; height: 1380px; box-sizing: border-box; background: #fff; border: 2px solid #e9edf3; border-radius: 32px; overflow: hidden; }
        </style>
        <div class="title">
            <svg width="24" height="16" viewBox="0 0 84 54" fill="#111729">${AKOMI_MARK}</svg>
            <span>Akomi</span>
            <svg class="pin" width="18" height="28" viewBox="0 0 18 28"><path d="M4 1.5 H14 M5.5 1.5 V12 L2 17 H16 L12.5 12 V1.5 M9 17 V27" fill="none" stroke="#555" stroke-width="2.4"/></svg>
            <svg width="20" height="20" viewBox="0 0 20 20"><path d="M2 2 L18 18 M18 2 L2 18" stroke="#444" stroke-width="2.4"/></svg>
        </div>
        <div class="outer">
            <div class="brand"><svg width="54" height="38" viewBox="0 0 84 54" fill="#111729" preserveAspectRatio="none">${AKOMI_MARK}</svg><span>akomi</span></div>
            <div class="date">
                <svg width="24" height="24" viewBox="0 0 24 24"><path d="M23 12 H2 M11 2 L1.5 12 L11 22" fill="none" stroke="#7f8591" stroke-width="2.4"/></svg>
                <span>Wednesday, Jul 9</span>
                <svg width="24" height="24" viewBox="0 0 24 24"><path d="M1 12 H22 M13 2 L22.5 12 L13 22" fill="none" stroke="#7f8591" stroke-width="2.4"/></svg>
            </div>
            <div class="inner"><slot></slot></div>
        </div>`;
    }
}

customElements.define("ecw-shell", EcwShell);
customElements.define("top-bar", TopBar);
customElements.define("nav-item", NavItem);
customElements.define("side-nav", SideNav);
customElements.define("tool-btn", ToolBtn);
customElements.define("count-badge", CountBadge);
customElements.define("tool-bar", ToolBar);
customElements.define("pixel-blur", PixelBlur);
customElements.define("appt-row", ApptRow);
customElements.define("day-schedule", DaySchedule);
customElements.define("month-panel", MonthPanel);
customElements.define("akomi-status", AkomiStatus);
customElements.define("akomi-row", AkomiRow);
customElements.define("akomi-patient", AkomiPatient);
customElements.define("akomi-panel", AkomiPanel);
</script>
</body>
</html>
